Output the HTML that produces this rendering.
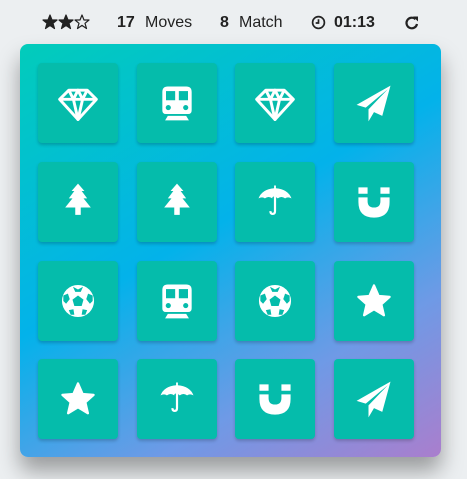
<!DOCTYPE html>
<html><head><meta charset="utf-8"><style>
html,body{margin:0;padding:0}
body{width:467px;height:479px;overflow:hidden;background:#eceff1;font-family:"Liberation Sans",sans-serif;position:relative;color:#222}
.hdr{position:absolute;top:12px;left:0;width:467px;height:24px;font-size:16px}
.hdr span{position:absolute;top:2px}
.board{position:absolute;left:20px;top:44px;width:421px;height:413px;border-radius:8px;background:linear-gradient(150deg,#02ccba 0%,#03b2ea 45%,#6e9ae6 75%,#aa7ecd 100%);box-shadow:0 14px 22px rgba(0,0,0,.35)}
.c{position:absolute;width:80px;height:80px;border-radius:4px;background:#05bcab;box-shadow:0 2px 3px rgba(0,0,0,.2);display:flex;align-items:center;justify-content:center}
.c svg{width:44px;height:44px}
</style></head><body>
<svg width="0" height="0" style="position:absolute">
<defs>
<symbol id="dia" viewBox="0 0 48 48"><g fill="none" stroke="#fff" stroke-width="3.2" stroke-linejoin="round"><path d="M14 10H34L44 20L24 42L4 20Z"/><path d="M4 20H44M14 10L19 20L24 42L29 20L34 10M19 20L24 10L29 20"/></g></symbol>
<symbol id="train" viewBox="0 0 48 48"><path fill="#fff" d="M14 6H34Q40 6 40 12V32Q40 36 36 36H12Q8 36 8 32V12Q8 6 14 6Z"/><rect x="12" y="11" width="10" height="10" fill="#05bcab"/><rect x="26" y="11" width="10" height="10" fill="#05bcab"/><circle cx="14.5" cy="29" r="2.8" fill="#05bcab"/><circle cx="33.5" cy="29" r="2.8" fill="#05bcab"/><path fill="#fff" d="M14 38H34L37 43H11Z"/></symbol>
<symbol id="plane" viewBox="0 0 48 48"><path fill="#fff" d="M42 5L5 26L15 29L39 9L18 31L18 44L24 34L33 38Z"/></symbol>
<symbol id="tree" viewBox="0 0 48 48"><path fill="#fff" d="M24 4L31 12H28L34 20H30L38 30H27V38H21V30H10L18 20H14L20 12H17Z"/></symbol>
<symbol id="umb" viewBox="0 0 48 48"><path fill="#fff" d="M23 6H25V9Q38 10 42 20Q38 18 35 20Q31 17 27 20Q25 18 23 18Q21 18 21 20Q17 17 13 20Q10 18 6 20Q10 10 23 9Z"/><path d="M24 18V34Q24 37 21.5 37Q19 37 19 34" fill="none" stroke="#fff" stroke-width="2.4"/></symbol>
<symbol id="mag" viewBox="0 0 48 48"><path fill="#fff" d="M7 8H17V15H7ZM31 8H41V15H31ZM7 19H17V23Q17 30 24 30Q31 30 31 23V19H41V24Q41 41 24 41Q7 41 7 24Z"/></symbol>
<symbol id="ball" viewBox="0 0 48 48"><circle cx="24" cy="24" r="17.5" fill="#fff"/><path fill="#05bcab" d="M24 18L30 22.5L28 29.5H20L18 22.5Z M18.5 8.5L24 11.5L29.5 8.5L27 14L21 14Z M8 18L13 16L15 22L11 27L8 24Z M40 18L35 16L33 22L37 27L40 24Z M14 34L19 33L20 39L16 39Z M34 34L29 33L28 39L32 39Z"/></symbol>
<symbol id="star" viewBox="0 0 48 48"><path fill="#fff" stroke="#fff" stroke-width="2.5" stroke-linejoin="round" d="M24 7L29 18.5L41 19.5L32 27.5L34.8 39.5L24 33L13.2 39.5L16 27.5L7 19.5L19 18.5Z"/></symbol>
</defs></svg>
<div class="hdr">
<span style="left:42px;top:2px"><svg width="48" height="16" viewBox="0 0 48 16"><g stroke="#222" stroke-width="1.2" stroke-linejoin="round"><path fill="#222" d="M8 1L10 6H15L11 9.3L12.5 14.5L8 11.4L3.5 14.5L5 9.3L1 6H6Z"/><path fill="#222" d="M24 1L26 6H31L27 9.3L28.5 14.5L24 11.4L19.5 14.5L21 9.3L17 6H22Z"/><path fill="none" d="M40 1L42 6H47L43 9.3L44.5 14.5L40 11.4L35.5 14.5L37 9.3L33 6H38Z"/></g></svg></span>
<span style="left:117px;font-weight:bold">17</span><span style="left:145px">Moves</span>
<span style="left:220px;font-weight:bold">8</span><span style="left:239px">Match</span>
<span style="left:311px;top:3px"><svg width="15" height="15" viewBox="0 0 16 16"><circle cx="8" cy="8" r="6.3" fill="none" stroke="#222" stroke-width="1.8"/><path d="M8 4.5V8.5H5" fill="none" stroke="#222" stroke-width="1.8"/></svg></span>
<span style="left:334px;font-weight:bold">01:13</span>
<span style="left:404px;top:3px"><svg width="16" height="16" viewBox="0 0 16 16"><path d="M13 9A5.3 5.3 0 1 1 11.5 4.2" fill="none" stroke="#222" stroke-width="2.2"/><path d="M9 1.5H14V6.5Z" fill="#222"/></svg></span>
</div>
<div class="board">
<div class="c" style="left:18px;top:19px"><svg><use href="#dia"/></svg></div>
<div class="c" style="left:117px;top:19px"><svg><use href="#train"/></svg></div>
<div class="c" style="left:215px;top:19px"><svg><use href="#dia"/></svg></div>
<div class="c" style="left:314px;top:19px"><svg><use href="#plane"/></svg></div>
<div class="c" style="left:18px;top:118px"><svg><use href="#tree"/></svg></div>
<div class="c" style="left:117px;top:118px"><svg><use href="#tree"/></svg></div>
<div class="c" style="left:215px;top:118px"><svg><use href="#umb"/></svg></div>
<div class="c" style="left:314px;top:118px"><svg><use href="#mag"/></svg></div>
<div class="c" style="left:18px;top:217px"><svg><use href="#ball"/></svg></div>
<div class="c" style="left:117px;top:217px"><svg><use href="#train"/></svg></div>
<div class="c" style="left:215px;top:217px"><svg><use href="#ball"/></svg></div>
<div class="c" style="left:314px;top:217px"><svg><use href="#star"/></svg></div>
<div class="c" style="left:18px;top:315px"><svg><use href="#star"/></svg></div>
<div class="c" style="left:117px;top:315px"><svg><use href="#umb"/></svg></div>
<div class="c" style="left:215px;top:315px"><svg><use href="#mag"/></svg></div>
<div class="c" style="left:314px;top:315px"><svg><use href="#plane"/></svg></div>
</div>
</body></html>
